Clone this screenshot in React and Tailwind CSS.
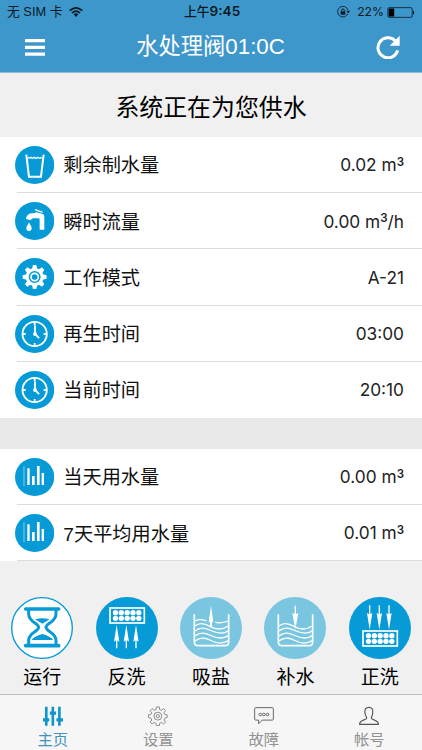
import React from 'react';
import clsx from 'clsx';

const GlassIcon = () => (
  <g fill="none" stroke="#fff">
    <path d="M34 26 L42 92 H78 L86 26" strokeWidth="6" />
    <path d="M39 34 q5 5 9 0 q5 5 10 0 q5 5 10 0 q5 5 12 0" strokeWidth="4" />
  </g>
);

const FaucetIcon = () => (
  <g fill="#fff">
    <path d="M33 51 C34 40 42 34 53 34 L60 33 L64 31 L84 36 C87 38 88 42 88 47 V83 H74 V53 C74 50 72 49 69 49 H55 C50 49 49 52 48 55 Z" />
    <path d="M60 21 L84 29 L83 32 L73 30 L60 25 Z" />
    <path d="M42 61 C45 69 50 73 50 79 A8 8 0 0 1 34 79 C34 73 39 69 42 61 Z" />
  </g>
);

const teeth = [0, 45, 90, 135, 180, 225, 270, 315];

const GearIcon = () => (
  <g>
    {teeth.map(a => (
      <path key={a} d="M51 34 L54 21 H64 L67 34 Z" fill="#fff" transform={`rotate(${a} 59 57)`} />
    ))}
    <circle cx="59" cy="57" r="22.5" fill="none" stroke="#fff" strokeWidth="9" />
    <circle cx="59" cy="57" r="11" fill="none" stroke="#fff" strokeWidth="5" />
  </g>
);

const ClockIcon = () => (
  <g fill="none" stroke="#fff" strokeWidth="5.5">
    <circle cx="59" cy="57" r="36.5" />
    <path d="M59 20v10M59 84v10M22 57h10M86 57h10" />
    <path d="M60 33V57L71 68" strokeLinecap="round" />
    <circle cx="60" cy="57" r="3" fill="#fff" />
  </g>
);

const BarsIcon = () => (
  <g fill="#fff">
    <path d="M26 25h2v59h-2z" opacity=".75" />
    <path d="M37 31h7v50h-7zM51 54h8v27h-8zM66 24h8v57h-8zM80 45h7v36h-7z" />
  </g>
);

const CubicMeters = ({ suffix }) => (
  <>
    {' m'}
    <span className="relative -top-[5.5px] text-[11.5px] font-semibold">3</span>
    {suffix}
  </>
);

const usage = [
  { label: '剩余制水量', value: '0.02', unit: <CubicMeters />, icon: GlassIcon },
  { label: '瞬时流量', value: '0.00', unit: <CubicMeters suffix="/h" />, icon: FaucetIcon },
  { label: '工作模式', value: 'A-21', icon: GearIcon },
  { label: '再生时间', value: '03:00', icon: ClockIcon },
  { label: '当前时间', value: '20:10', icon: ClockIcon },
];

const stats = [
  { label: '当天用水量', value: '0.00', unit: <CubicMeters />, icon: BarsIcon },
  { label: '7天平均用水量', value: '0.01', unit: <CubicMeters />, icon: BarsIcon },
];

const Row = ({ label, value, unit, icon: Icon, last }) => (
  <div className="relative flex h-[56.2px] items-center pl-[14.5px] pr-[18px]">
    <svg viewBox="0 0 118 114" className="h-[38px] w-[39.3px]">
      <ellipse cx="59" cy="57" rx="59" ry="57" fill="#069bd7" />
      <Icon />
    </svg>
    <span className="ml-[9.5px] pt-[2px] text-[19.2px] leading-none text-[#111]">{label}</span>
    <span className="ml-auto font-[Inter] text-[17.3px] leading-none text-[#222]">
      {value}
      {unit}
    </span>
    {!last && <div className="absolute bottom-0 left-[17px] right-0 h-px bg-[#dcdcdc]" />}
  </div>
);

const HourglassIcon = () => (
  <g>
    <circle cx="93" cy="93" r="91" fill="#fff" stroke="#069bd7" strokeWidth="4" />
    <g fill="none" stroke="#069bd7" strokeLinecap="round">
      <path d="M44 36H143M44 146H143" strokeWidth="11" />
      <path d="M53 40V50C53 76 83 78 83 91S53 106 53 130V143M135 40V50C135 76 105 78 105 91S135 106 135 130V143" strokeWidth="9" />
    </g>
    <path d="M72 67 Q93 61 116 67 L94 80 Z" fill="#069bd7" />
    <path d="M62 129 Q68 118 94 111 Q120 118 126 129 Z" fill="#069bd7" />
  </g>
);

const Resin = ({ y }) => (
  <g>
    <rect x="42" y={y} width="103" height="45" fill="none" stroke="#fff" strokeWidth="5" />
    {[0, 1, 2, 3, 4].map(i => (
      <g key={i} fill="#fff">
        <circle cx={58.5 + i * 17.5} cy={y + 14} r="8" />
        <circle cx={58.5 + i * 17.5} cy={y + 31} r="8" />
      </g>
    ))}
  </g>
);

const BackwashIcon = () => (
  <g>
    <circle cx="93" cy="93" r="93" fill="#069bd7" />
    <Resin y={33} />
    <path d="M62 84l8 50-6-4v24h-4v-24l-6 4zM91 84l8 50-6-4v24h-4v-24l-6 4zM120 84l8 50-6-4v24h-4v-24l-6 4z" fill="#fff" />
  </g>
);

const RinseIcon = () => (
  <g>
    <circle cx="93" cy="93" r="93" fill="#069bd7" />
    <path d="M62 98l-8-50 6 4V25h4v27l6-4zM91 98l-8-50 6 4V25h4v27l6-4zM120 98l-8-50 6 4V25h4v27l6-4z" fill="#fff" />
    <Resin y={102} />
  </g>
);

const Tank = ({ children }) => (
  <g>
    <circle cx="93" cy="93" r="93" fill="#7ac6e1" />
    <g fill="none" stroke="#fff" strokeWidth="5">
      <path d="M43 52V134Q43 146 55 146H134Q146 146 146 134V52" />
      <path d="M45 87C60 74 76 80 90 88S125 100 145 87M45 102C64 86 82 96 96 102S128 114 145 101M45 117C64 101 82 111 96 117S128 128 145 116M45 132C64 116 84 126 96 132S128 141 145 131" strokeWidth="4" />
    </g>
    {children}
  </g>
);

const BrineIcon = () => (
  <Tank>
    <path d="M45 72Q60 64 80 72M106 76Q125 80 145 72" fill="none" stroke="#fff" strokeWidth="4" />
    <path d="M93 26l7 50-4-2v17h-6V74l-4 2z" fill="#fff" />
  </Tank>
);

const RefillIcon = () => (
  <Tank>
    <path d="M94 98l-9-50 7 3V26h4v25l7-3z" fill="#fff" />
  </Tank>
);

const modes = [
  { label: '运行', icon: HourglassIcon },
  { label: '反洗', icon: BackwashIcon },
  { label: '吸盐', icon: BrineIcon },
  { label: '补水', icon: RefillIcon },
  { label: '正洗', icon: RinseIcon },
];

const SlidersIcon = () => (
  <g fill="#0f94cc">
    <path d="M6 2h8v58H6zM26 2h8v58h-8zM46 2h8v58h-8z" />
    <path d="M0 37h19v10H0zM21 17h19v10H21zM41 37h20v10H41z" />
  </g>
);

const OutlineGearIcon = () => (
  <g fill="none" stroke="#8a8a8a" strokeWidth="3">
    <path d="M26 3h9l1 8 6 2 6-5 6 6-5 7 3 5 7 1v8l-7 2-3 6 5 6-6 6-6-5-6 3-1 7h-9l-1-7-6-3-6 5-6-6 5-6-3-6-7-2v-8l7-1 3-5-5-7 6-6 6 5 6-2z" transform="translate(-0.5 0)" />
    <circle cx="30" cy="31" r="12" />
    <circle cx="30" cy="31" r="5" />
  </g>
);

const ChatIcon = () => (
  <g fill="none" stroke="#666" strokeWidth="3">
    <path d="M5 5H56Q59 5 59 8V40Q59 43 56 43H25L14 54V43H5Q2 43 2 40V8Q2 5 5 5Z" />
    <circle cx="19" cy="26" r="4" />
    <circle cx="30" cy="26" r="4" />
    <circle cx="41" cy="26" r="4" />
  </g>
);

const UserIcon = () => (
  <g fill="none" stroke="#555" strokeWidth="3.5">
    <path d="M30 4C21 4 17 10 18 19C18 27 21 31 23 34V38C20 43 3 43 2 54V56H59V54C58 43 41 43 38 38V34C40 31 42 27 42 19C43 10 39 4 30 4Z" />
  </g>
);

const tabs = [
  { label: '主页', icon: SlidersIcon, active: true },
  { label: '设置', icon: OutlineGearIcon },
  { label: '故障', icon: ChatIcon },
  { label: '帐号', icon: UserIcon },
];

const StatusBar = () => (
  <div className="relative flex h-6 items-center px-[7px] text-[12.8px] leading-none text-[#0a1a24]">
    <span>无 SIM 卡</span>
    <svg viewBox="0 0 42 30" className="ml-[7px] h-[10px] w-[14px]">
      <g fill="none" stroke="#0a1a24" strokeWidth="5">
        <path d="M2 11Q21 -6 40 11" />
        <path d="M9 18Q21 7 33 18" />
      </g>
      <path d="M14 22Q21 16 28 22L21 30Z" fill="#0a1a24" />
    </svg>
    <span className="absolute left-[184px] whitespace-nowrap font-medium">
      上午<b className="font-[Inter] text-[13.6px] font-semibold">9:45</b>
    </span>
    <svg viewBox="0 0 39 36" className="ml-auto h-3 w-[13px]">
      <path d="M33 22A16 16 0 1 1 33 12" fill="none" stroke="#0a1a24" strokeWidth="2.5" />
      <path d="M28 14h11l-5 8z" fill="#0a1a24" />
      <path d="M11 16h14v10H11z" fill="#0a1a24" />
      <path d="M14 17v-4a4 4 0 0 1 8 0v4" fill="none" stroke="#0a1a24" strokeWidth="3" />
    </svg>
    <span className="ml-[7px] font-[Inter] text-[12.2px]">22%</span>
    <svg viewBox="0 0 84 34" className="ml-[3px] h-[11px] w-[28px]">
      <rect x="1.5" y="2" width="75" height="30" rx="4" fill="none" stroke="#0a1a24" strokeWidth="2.5" />
      <path d="M4 5h17v24H4zM79 10q7 7 0 14z" fill="#000" />
    </svg>
  </div>
);

const App = () => {
  return (
    <div className="flex h-[750px] w-[422px] flex-col overflow-hidden bg-[#f0f0f0] font-['Liberation_Sans','Noto_Sans_CJK_SC',sans-serif]">
      <header className="h-[73px] shrink-0 border-b border-[#8fbbd6] bg-[#3e97cb]">
        <StatusBar />
        <div className="flex h-[46px] items-center justify-between pl-[25px] pr-[22px]">
          <svg viewBox="0 0 20 17" className="h-[17px] w-5">
            <path d="M0 1.6H20M0 8.4H20M0 15.2H20" stroke="#fff" strokeWidth="3.2" />
          </svg>
          <h1 className="text-[22.3px] leading-none text-white">水处理阀01:0C</h1>
          <svg viewBox="0 0 72 72" className="h-6 w-6">
            <path d="M65 46A30 30 0 1 1 57 17" fill="none" stroke="#fff" strokeWidth="9" />
            <path d="M71 2V32H41Z" fill="#fff" />
          </svg>
        </div>
      </header>

      <div className="flex h-16 shrink-0 items-center justify-center pt-[6px] text-[23.9px] leading-none text-black">
        系统正在为您供水
      </div>

      <section className="bg-white">
        {usage.map((item, i) => (
          <Row key={item.label} {...item} last={i === usage.length - 1} />
        ))}
      </section>
      <div className="h-[31px] shrink-0 bg-[#e9e9e9]" />
      <section className="bg-white">
        {stats.map(item => (
          <Row key={item.label} {...item} />
        ))}
      </section>

      <div className="grid grid-cols-5 pt-[35.5px]">
        {modes.map(({ label, icon: Icon }) => (
          <div key={label} className="flex flex-col items-center">
            <svg viewBox="0 0 186 186" className="h-[62px] w-[62px]">
              <Icon />
            </svg>
            <span className="mt-[9px] text-[19px] leading-5 text-black">{label}</span>
          </div>
        ))}
      </div>

      <nav className="mt-auto grid h-[56px] shrink-0 grid-cols-4 border-t border-[#bfbfbf] bg-[#f6f6f6]">
        {tabs.map(({ label, icon: Icon, active }) => (
          <div key={label} className="flex flex-col items-center pt-[11px]">
            <svg viewBox="0 0 61 61" className="h-5 w-5">
              <Icon />
            </svg>
            <span
              className={clsx(
                'mt-[6px] text-[15.3px] leading-4',
                active ? 'text-[#3f93c0]' : 'text-[#929292]'
              )}
            >
              {label}
            </span>
          </div>
        ))}
      </nav>
    </div>
  );
};

export default App;
